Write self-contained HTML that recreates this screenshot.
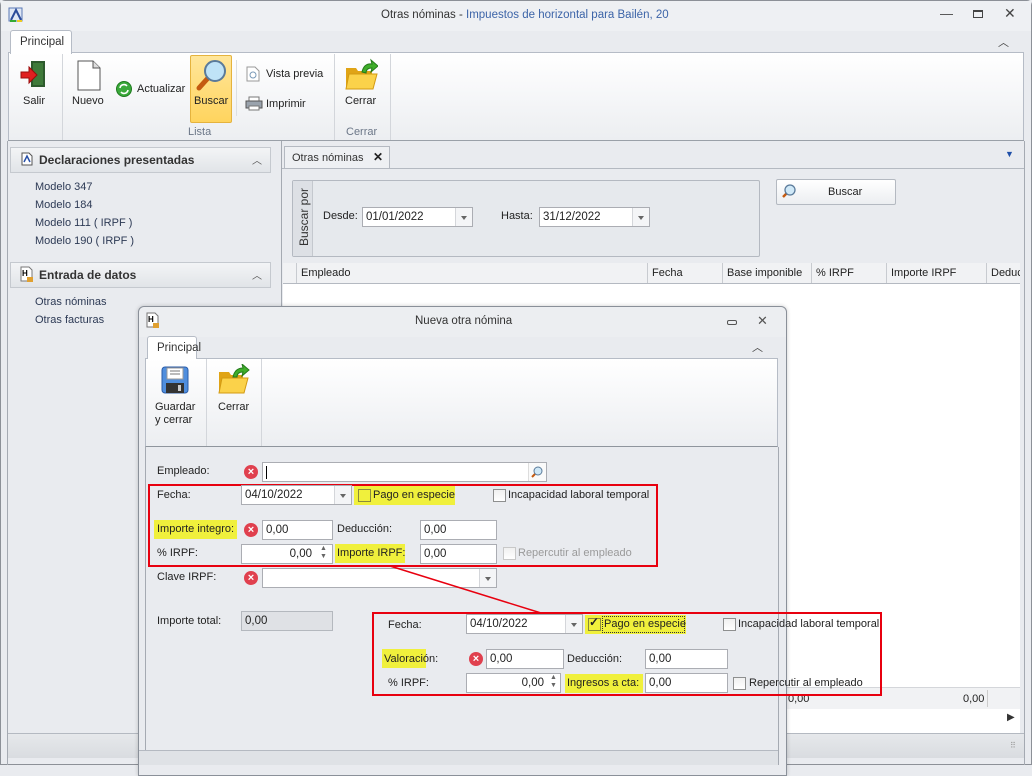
<!DOCTYPE html>
<html><head><meta charset="utf-8">
<style>
*{box-sizing:border-box;margin:0;padding:0}
body{width:1032px;height:765px;position:relative;overflow:hidden;background:#e9ebef;font-family:"Liberation Sans",sans-serif;font-size:11px;color:#222}
.a{position:absolute}
.t{position:absolute;white-space:nowrap}
.inp{position:absolute;background:#fff;border:1px solid #abadb3;height:20px;padding:3px 3px;white-space:nowrap;font-size:11.5px}
.dd{position:absolute;right:0;top:0;width:17px;height:18px;border-left:1px solid #d4d6da;background:#f4f5f7}
.dd:after{content:"";position:absolute;left:5px;top:8px;border:3px solid transparent;border-top:4px solid #666}
.err{position:absolute;width:14px;height:14px;border-radius:50%;background:#e0404e;color:#fff;font-size:11px;line-height:14px;text-align:center;font-weight:bold}
.hl{position:absolute;background:#f0f03c;height:19px}
.cb{position:absolute;width:13px;height:13px;border:1px solid #8e8f8f;background:linear-gradient(#f0f0f0,#fff)}
.red{position:absolute;border:2px solid #e8000f}
.hdr{position:absolute;background:linear-gradient(#f3f4f6,#e1e4e8);border:1px solid #c5c9cf}
.col{position:absolute;top:0;height:20px;border-right:1px solid #c8cbd0;padding:4px 4px;white-space:nowrap}
</style></head><body>
<div class="a" style="left:0;top:0;width:1032px;height:765px;border:1px solid #8c9097;border-radius:5px 5px 0 0;"></div>
<div class="a" style="left:1px;top:1px;width:1030px;height:30px;background:#eef0f3"></div>
<svg class="a" style="left:8px;top:7px" width="16" height="16"><rect x="1" y="1" width="13" height="13" fill="#dfe7f5" stroke="#5a78b5"/><path d="M3 13 L8 3 L13 13" stroke="#2a4a9a" stroke-width="2" fill="none"/><path d="M2 14 H8" stroke="#3a3" stroke-width="2"/><path d="M9 14 H14" stroke="#ec2" stroke-width="2"/></svg>
<div class="t" style="left:381px;top:9px;color:#333;font-size:11.5px">Otras nóminas - <span style="color:#3c64a8">Impuestos de horizontal para Bailén, 20</span></div>
<div class="t" style="left:940px;top:6px;color:#444;font-size:13px">—</div>
<div class="a" style="left:973px;top:10px;width:10px;height:8px;border:1px solid #444;border-top-width:2px"></div>
<div class="t" style="left:1004px;top:5px;color:#444;font-size:14px">✕</div>
<div class="t" style="left:998px;top:34px;font-size:11px;color:#444">︿</div>
<div class="a" style="left:8px;top:52px;width:1016px;height:89px;background:linear-gradient(#fff,#eceef1);border:1px solid #b6bcc6"></div>
<div class="a" style="left:10px;top:30px;width:62px;height:24px;background:#fff;border:1px solid #b6bcc6;border-bottom:none;border-radius:3px 3px 0 0"></div>
<div class="t" style="left:20px;top:36px;color:#333;font-size:11.5px">Principal</div>
<div class="a" style="left:62px;top:54px;width:1px;height:86px;background:#d3d6db"></div>
<div class="a" style="left:334px;top:54px;width:1px;height:86px;background:#d3d6db"></div>
<div class="a" style="left:390px;top:54px;width:1px;height:86px;background:#d3d6db"></div>
<div class="a" style="left:236px;top:60px;width:1px;height:56px;background:#dcdfe3"></div>
<svg class="a" style="left:19px;top:60px" width="30" height="30"><rect x="12" y="1" width="14" height="26" fill="#2d5a2d"/><rect x="14" y="3" width="10" height="22" fill="#3f7a3a"/><path d="M2 12 H10 V7 L18 15 L10 23 V18 H2 Z" fill="#e02020" stroke="#9a0c0c"/></svg>
<div class="t" style="left:23px;top:95px">Salir</div>
<svg class="a" style="left:76px;top:60px" width="26" height="32"><path d="M2 1 H17 L24 8 V30 H2 Z" fill="#fff" stroke="#555"/><path d="M17 1 V8 H24" fill="#ddd" stroke="#555"/></svg>
<div class="t" style="left:72px;top:95px">Nuevo</div>
<svg class="a" style="left:116px;top:81px" width="16" height="16"><circle cx="8" cy="8" r="7.5" fill="#3aa93a" stroke="#1e7a1e"/><path d="M4 7 A4 4 0 0 1 11 5 M12 9 A4 4 0 0 1 5 11" stroke="#fff" stroke-width="1.6" fill="none"/></svg>
<div class="t" style="left:137px;top:83px">Actualizar</div>
<div class="a" style="left:190px;top:55px;width:42px;height:68px;background:linear-gradient(#ffe69a,#ffd45e);border:1px solid #e5b33e;border-radius:2px"></div>
<svg class="a" style="left:193px;top:57px" width="36" height="36"><line x1="6" y1="31" x2="15" y2="21" stroke="#c45a10" stroke-width="5" stroke-linecap="round"/><circle cx="22" cy="14" r="10" fill="#bfe3f7" stroke="#5a7a9a" stroke-width="2"/></svg>
<div class="t" style="left:194px;top:95px">Buscar</div>
<svg class="a" style="left:246px;top:66px" width="14" height="16"><path d="M1 1 H9 L13 5 V15 H1 Z" fill="#fff" stroke="#999"/><circle cx="7" cy="9" r="3" fill="none" stroke="#7a9ab8"/></svg>
<div class="t" style="left:266px;top:68px">Vista previa</div>
<svg class="a" style="left:245px;top:96px" width="18" height="15"><rect x="4" y="1" width="10" height="5" fill="#fff" stroke="#777"/><rect x="1" y="5" width="16" height="7" fill="#9aa3ad" stroke="#555"/><rect x="4" y="10" width="10" height="4" fill="#fff" stroke="#777"/></svg>
<div class="t" style="left:266px;top:98px">Imprimir</div>
<div class="t" style="left:188px;top:126px;color:#6b7687">Lista</div>
<svg class="a" style="left:344px;top:58px" width="34" height="34"><path d="M2 10 H12 L14 13 H28 V30 H2 Z" fill="#e0a416"/><path d="M5 16 H33 L29 31 H2 Z" fill="#fbd24a" stroke="#d39a12"/><path d="M18 14 Q20 5 28 6 L27 2 L34 8 L27 14 L28 10 Q22 10 22 15 Z" fill="#3fae2a" stroke="#247a1a"/></svg>
<div class="t" style="left:345px;top:95px">Cerrar</div>
<div class="t" style="left:346px;top:126px;color:#6b7687">Cerrar</div>
<div class="a" style="left:8px;top:140px;width:1016px;height:1px;background:#9aa0a8"></div>

<div class="hdr" style="left:10px;top:147px;width:261px;height:26px"></div>
<svg class="a" style="left:21px;top:152px" width="12" height="14"><path d="M1 1 H8 L11 4 V13 H1 Z" fill="#fff" stroke="#555"/><path d="M3 10 L6 4 L9 10" stroke="#2850a8" stroke-width="1.5" fill="none"/></svg>
<div class="t" style="left:39px;top:153px;font-weight:bold;font-size:12px;color:#333">Declaraciones presentadas</div>
<div class="t" style="left:252px;top:152px;font-size:10px;color:#555">︿</div>
<div class="t" style="left:35px;top:181px;color:#2d3a55">Modelo 347</div>
<div class="t" style="left:35px;top:199px;color:#2d3a55">Modelo 184</div>
<div class="t" style="left:35px;top:217px;color:#2d3a55">Modelo 111 ( IRPF )</div>
<div class="t" style="left:35px;top:235px;color:#2d3a55">Modelo 190 ( IRPF )</div>
<div class="hdr" style="left:10px;top:262px;width:261px;height:26px"></div>
<svg class="a" style="left:20px;top:266px" width="14" height="17"><path d="M1 1 H9 L12 4 V15 H1 Z" fill="#fff" stroke="#777"/><text x="2" y="10" font-size="8" font-weight="bold" font-family="Liberation Sans">H</text><rect x="7" y="11" width="6" height="5" fill="#e0a030"/></svg>
<div class="t" style="left:39px;top:268px;font-weight:bold;font-size:12px;color:#333">Entrada de datos</div>
<div class="t" style="left:252px;top:267px;font-size:10px;color:#555">︿</div>
<div class="t" style="left:35px;top:296px;color:#2d3a55">Otras nóminas</div>
<div class="t" style="left:35px;top:314px;color:#2d3a55">Otras facturas</div>
<div class="a" style="left:281px;top:141px;width:1px;height:592px;background:#a5aab2"></div>
<div class="a" style="left:7px;top:141px;width:1px;height:624px;background:#a5aab2"></div>
<div class="a" style="left:1024px;top:141px;width:1px;height:624px;background:#a5aab2"></div>

<div class="a" style="left:284px;top:146px;width:106px;height:23px;background:#eef0f3;border:1px solid #b4b9c1;border-bottom:none"></div>
<div class="t" style="left:292px;top:152px;color:#333">Otras nóminas</div>
<div class="t" style="left:373px;top:150px;font-weight:bold;font-size:12px">✕</div>
<div class="t" style="left:1005px;top:149px;color:#1f4fa8;font-size:9px">▼</div>
<div class="a" style="left:282px;top:168px;width:742px;height:565px;border-top:1px solid #b4b9c1"></div>
<div class="a" style="left:292px;top:180px;width:468px;height:77px;border:1px solid #b4b9c1;border-radius:2px;background:#e6e9ed"></div>
<div class="a" style="left:293px;top:181px;width:20px;height:75px;background:#dde0e5;border-right:1px solid #c4c8ce"></div>
<div class="t" style="left:297px;top:246px;transform:rotate(-90deg);transform-origin:0 0;font-size:12px;color:#333">Buscar por</div>
<div class="t" style="left:323px;top:210px">Desde:</div>
<div class="inp" style="left:362px;top:207px;width:111px">01/01/2022<div class="dd"></div></div>
<div class="t" style="left:501px;top:210px">Hasta:</div>
<div class="inp" style="left:539px;top:207px;width:111px">31/12/2022<div class="dd"></div></div>
<div class="a" style="left:776px;top:179px;width:120px;height:26px;background:linear-gradient(#fff,#eceef1);border:1px solid #b4b9c1;border-radius:2px"></div>
<svg class="a" style="left:781px;top:183px" width="16" height="16"><line x1="2" y1="14" x2="6" y2="10" stroke="#c45a10" stroke-width="2.5"/><circle cx="9" cy="7" r="5" fill="#cfe8f7" stroke="#5a7a9a" stroke-width="1.3"/></svg>
<div class="t" style="left:828px;top:186px">Buscar</div>
<div class="a" style="left:283px;top:263px;width:737px;height:470px;background:#fff;border-top:1px solid #b4b9c1"></div>
<div class="a" style="left:283px;top:263px;width:737px;height:21px;background:#f1f2f4;border-bottom:1px solid #b4b9c1;overflow:hidden">
<div class="col" style="left:0;width:14px"></div>
<div class="col" style="left:14px;width:351px">Empleado</div>
<div class="col" style="left:365px;width:75px">Fecha</div>
<div class="col" style="left:440px;width:89px">Base imponible</div>
<div class="col" style="left:529px;width:75px">% IRPF</div>
<div class="col" style="left:604px;width:100px">Importe IRPF</div>
<div class="col" style="left:704px;width:60px;border:none">Deducción</div>
</div>
<div class="a" style="left:786px;top:687px;width:234px;height:22px;background:#f1f2f4;border-top:1px solid #d4d6da"></div>
<div class="t" style="left:788px;top:693px">0,00</div>
<div class="t" style="left:963px;top:693px">0,00</div>
<div class="a" style="left:987px;top:690px;width:1px;height:17px;background:#ccc"></div>
<div class="t" style="left:1007px;top:712px;font-size:10px;color:#333">▶</div>
<div class="a" style="left:8px;top:733px;width:1016px;height:25px;background:linear-gradient(#e6e8eb,#d9dce0);border-top:1px solid #b4b9c1"></div>
<div class="t" style="left:1010px;top:741px;font-size:8px;color:#999">⠿</div>

<!-- dialog -->
<div class="a" style="left:138px;top:306px;width:649px;height:470px;background:#e9ebef;border:1px solid #8a9099;border-radius:6px 6px 0 0;box-shadow:0 0 4px rgba(0,0,0,.2)"></div>
<div class="a" style="left:139px;top:307px;width:647px;height:30px;background:#eceef1;border-radius:6px 6px 0 0"></div>
<svg class="a" style="left:146px;top:312px" width="14" height="17"><path d="M1 1 H9 L12 4 V15 H1 Z" fill="#fff" stroke="#777"/><text x="2" y="10" font-size="8" font-weight="bold" font-family="Liberation Sans">H</text><rect x="7" y="11" width="6" height="5" fill="#e0a030"/></svg>
<div class="t" style="left:415px;top:315px;color:#333;font-size:11.5px">Nueva otra nómina</div>
<div class="a" style="left:727px;top:320px;width:10px;height:5px;border:1px solid #555;border-radius:2px"></div>
<div class="t" style="left:757px;top:313px;color:#555;font-size:13px">✕</div>
<div class="a" style="left:145px;top:358px;width:633px;height:89px;background:linear-gradient(#fff,#eceef1);border:1px solid #b6bcc6;border-bottom:1px solid #8f959d"></div>
<div class="a" style="left:147px;top:336px;width:50px;height:23px;background:#fff;border:1px solid #b6bcc6;border-bottom:none;border-radius:3px 3px 0 0"></div>
<div class="t" style="left:157px;top:342px;color:#333;font-size:11.5px">Principal</div>
<div class="t" style="left:752px;top:339px;font-size:11px;color:#444">︿</div>
<div class="a" style="left:206px;top:359px;width:1px;height:87px;background:#d3d6db"></div>
<div class="a" style="left:261px;top:359px;width:1px;height:87px;background:#d3d6db"></div>
<svg class="a" style="left:161px;top:366px" width="28" height="28"><rect x="1" y="1" width="26" height="26" rx="3" fill="#4f8ede" stroke="#2a5ca8"/><rect x="6" y="2" width="16" height="11" fill="#fff" stroke="#999"/><path d="M9 5 H19 M9 8 H19" stroke="#777"/><rect x="5" y="17" width="18" height="10" fill="#333"/><rect x="17" y="19" width="3" height="6" fill="#ccc"/></svg>
<div class="t" style="left:155px;top:401px;line-height:13px">Guardar<br>y cerrar</div>
<svg class="a" style="left:217px;top:364px" width="34" height="30"><path d="M2 8 H12 L14 11 H26 V28 H2 Z" fill="#e0a416"/><path d="M5 14 H31 L27 29 H2 Z" fill="#fbd24a" stroke="#d39a12"/><path d="M16 13 Q18 4 26 4 L25 0 L32 6 L25 12 L26 8 Q20 8 20 13 Z" fill="#3fae2a" stroke="#247a1a"/></svg>
<div class="t" style="left:218px;top:401px">Cerrar</div>
<div class="a" style="left:778px;top:447px;width:1px;height:318px;background:#a5aab2"></div>
<div class="a" style="left:145px;top:447px;width:1px;height:318px;background:#a5aab2"></div>
<div class="a" style="left:139px;top:750px;width:639px;height:15px;background:#dfe2e6;border-top:1px solid #b4b9c1"></div>

<div class="t" style="left:157px;top:465px">Empleado:</div>
<div class="err" style="left:244px;top:465px">×</div>
<div class="inp" style="left:262px;top:462px;width:285px"><span style="border-left:1px solid #000;height:13px;display:inline-block"></span></div>
<div class="a" style="left:528px;top:463px;width:18px;height:18px;border-left:1px solid #ddd;background:#fafafa"></div>
<svg class="a" style="left:530px;top:465px" width="14" height="14"><line x1="2" y1="12" x2="5" y2="9" stroke="#c45a10" stroke-width="2"/><circle cx="8" cy="6" r="4" fill="#cfe8f7" stroke="#5a7a9a"/></svg>

<div class="red" style="left:148px;top:484px;width:510px;height:83px"></div>
<div class="t" style="left:157px;top:489px">Fecha:</div>
<div class="inp" style="left:241px;top:485px;width:111px">04/10/2022<div class="dd"></div></div>
<div class="hl" style="left:354px;top:486px;width:101px"></div>
<div class="cb" style="left:358px;top:489px;border-color:#8a8a3a;background:#f0f03c"></div>
<div class="t" style="left:373px;top:489px">Pago en especie</div>
<div class="cb" style="left:493px;top:489px"></div>
<div class="t" style="left:508px;top:489px">Incapacidad laboral temporal</div>
<div class="hl" style="left:154px;top:520px;width:83px"></div>
<div class="t" style="left:157px;top:523px">Importe integro:</div>
<div class="err" style="left:244px;top:523px">×</div>
<div class="inp" style="left:262px;top:520px;width:71px">0,00</div>
<div class="t" style="left:337px;top:523px">Deducción:</div>
<div class="inp" style="left:420px;top:520px;width:77px">0,00</div>
<div class="t" style="left:157px;top:547px">% IRPF:</div>
<div class="inp" style="left:241px;top:544px;width:92px;text-align:right;padding-right:20px">0,00</div>
<div class="t" style="left:320px;top:545px;font-size:7px;color:#666;line-height:8px">▲<br>▼</div>
<div class="hl" style="left:335px;top:544px;width:70px"></div>
<div class="t" style="left:337px;top:547px">Importe IRPF:</div>
<div class="inp" style="left:420px;top:544px;width:77px">0,00</div>
<div class="cb" style="left:503px;top:547px;border-color:#c8c8c8"></div>
<div class="t" style="left:518px;top:547px;color:#9a9a9a">Repercutir al empleado</div>
<div class="t" style="left:157px;top:571px">Clave IRPF:</div>
<div class="err" style="left:244px;top:571px">×</div>
<div class="inp" style="left:262px;top:568px;width:235px"><div class="dd"></div></div>
<div class="t" style="left:157px;top:615px">Importe total:</div>
<div class="inp" style="left:241px;top:611px;width:92px;background:#dfe1e5;border-color:#b4b8be">0,00</div>

<svg class="a" style="left:0;top:0" width="1032" height="765"><line x1="390" y1="566" x2="541" y2="613" stroke="#e8000f" stroke-width="1.5"/></svg>

<div class="red" style="left:372px;top:612px;width:510px;height:84px"></div>
<div class="t" style="left:388px;top:619px">Fecha:</div>
<div class="inp" style="left:466px;top:614px;width:117px">04/10/2022<div class="dd"></div></div>
<div class="hl" style="left:585px;top:615px;width:101px"></div>
<div class="cb" style="left:588px;top:618px;border-color:#8a8a3a;background:#f0f03c"></div>
<div class="t" style="left:589px;top:615px;font-size:12px;font-weight:bold">✓</div>
<div class="a" style="left:602px;top:616px;width:83px;height:17px;border:1px dotted #333"></div>
<div class="t" style="left:604px;top:618px">Pago en especie</div>
<div class="cb" style="left:723px;top:618px"></div>
<div class="t" style="left:738px;top:618px">Incapacidad laboral temporal</div>
<div class="hl" style="left:382px;top:649px;width:44px"></div>
<div class="t" style="left:384px;top:653px">Valoración:</div>
<div class="err" style="left:469px;top:652px">×</div>
<div class="inp" style="left:486px;top:649px;width:78px">0,00</div>
<div class="t" style="left:567px;top:653px">Deducción:</div>
<div class="inp" style="left:645px;top:649px;width:83px">0,00</div>
<div class="t" style="left:388px;top:677px">% IRPF:</div>
<div class="inp" style="left:466px;top:673px;width:95px;text-align:right;padding-right:16px">0,00</div>
<div class="t" style="left:550px;top:674px;font-size:7px;color:#666;line-height:8px">▲<br>▼</div>
<div class="hl" style="left:565px;top:674px;width:78px"></div>
<div class="t" style="left:567px;top:677px">Ingresos a cta:</div>
<div class="inp" style="left:645px;top:673px;width:83px">0,00</div>
<div class="cb" style="left:733px;top:677px"></div>
<div class="t" style="left:749px;top:677px">Repercutir al empleado</div>
</body></html>
